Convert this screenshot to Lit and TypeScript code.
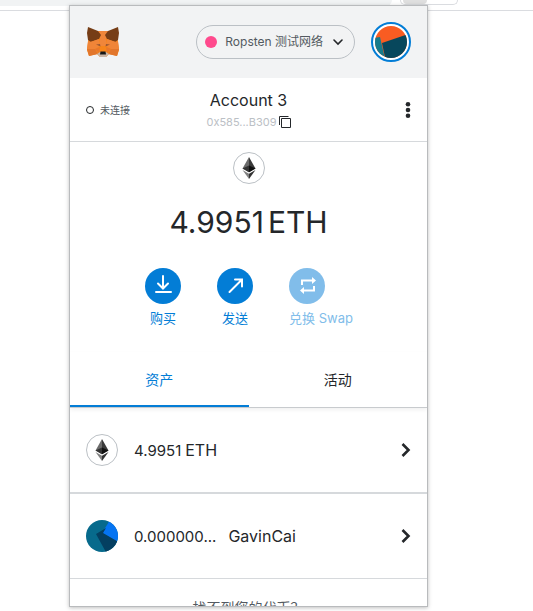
import { LitElement, html, svg, css } from "lit";
import { customElement, property, state } from "lit/decorators.js";
import { classMap } from "lit/directives/class-map.js";

const ethGlyph = svg`
  <path d="M16 5 L9.5 16.5 L16 20.3 Z" fill="#6b6b6b"/>
  <path d="M16 5 L22.5 16.5 L16 20.3 Z" fill="#3a3a3a"/>
  <path d="M9.5 16.5 L16 13.5 V20.3 Z" fill="#333"/>
  <path d="M22.5 16.5 L16 13.5 V20.3 Z" fill="#111"/>
  <path d="M9.5 18 L16 21.8 V27 Z" fill="#808080"/>
  <path d="M22.5 18 L16 21.8 V27 Z" fill="#333"/>`;

@customElement("eth-icon")
class EthIcon extends LitElement {
  static styles = css`
    :host { display: block; width: 32px; height: 32px; }
    svg { display: block; }
  `;
  render() {
    return html`<svg width="32" height="32" viewBox="0 0 32 32" aria-hidden="true">
      <circle cx="16" cy="16" r="15.5" fill="#fff" stroke="#bbc0c5"/>${ethGlyph}
    </svg>`;
  }
}

@customElement("token-row")
class TokenRow extends LitElement {
  @property() amount = "";
  @property() symbol = "";

  static styles = css`
    :host { display: block; }
    .row {
      display: flex; align-items: center; width: 100%; height: 84px;
      padding: 0 16px; box-sizing: border-box; border: 0; background: none;
      color: #24272a; font: 16px/22px Inter, "Noto Sans CJK SC", sans-serif;
      text-align: left; cursor: pointer;
    }
    .text { flex: 1; display: flex; align-items: baseline; gap: 12px; margin-left: 16px; white-space: pre; }
    .text.tight { gap: 4px; }
    .amount { font-size: 15px; }
    svg { display: block; }
  `;
  render() {
    return html`<button class="row">
      <slot></slot>
      <span class=${classMap({ text: true, tight: this.symbol === "ETH" })}><span class="amount">${this.amount}</span><span>${this.symbol}</span></span>
      <svg width="10" height="16" viewBox="0 0 10 16" aria-hidden="true">
        <path d="M1.5 2 L7.5 8 L1.5 14" fill="none" stroke="#24272a" stroke-width="2.6"/>
      </svg>
    </button>`;
  }
}

@customElement("app-root")
class AppRoot extends LitElement {
  @state() tab = "assets";

  static styles = css`
    :host {
      display: flex; flex-direction: column; height: 100vh; overflow: hidden;
      background: #fff; color: #24272a;
      font: 14px/20px Inter, "Noto Sans CJK SC", sans-serif;
    }
    button { font: inherit; color: inherit; padding: 0; border: 0; background: none; cursor: pointer; }
    svg { display: block; }
    .browser {
      display: flex; flex: none; height: 10px; box-sizing: content-box;
      border-bottom: 1px solid #dadce0; overflow: hidden;
    }
    .address { width: 392px; height: 6px; background: #f1f3f4; border-radius: 0 0 12px 0; }
    .profile {
      width: 56px; height: 4px; margin-left: 8px;
      border: 1px solid #dadce0; border-top: 0; border-radius: 0 0 14px 14px;
    }
    .person { width: 24px; height: 4px; margin-left: 2px; background: #dfdfdf; border-radius: 0 0 12px 12px; }
    .popup {
      flex: 1; min-height: 0; margin: -6px 105px 4px 69px; position: relative;
      display: flex; flex-direction: column; overflow: hidden;
      background: #fff; border: 1px solid #b9bbbd; box-shadow: 0 1px 4px rgba(0, 0, 0, 0.25);
    }
    .popup > * { flex: none; }
    .top {
      display: flex; align-items: center; height: 72px; padding: 0 16px;
      background: #f2f3f4;
    }
    .network {
      display: flex; align-items: center; height: 34px; margin-left: auto;
      padding: 0 11px 0 8px; border: 1px solid #bbc0c5; border-radius: 17px;
      color: #535a61; font-size: 12px; box-sizing: border-box;
    }
    .dot { width: 12px; height: 12px; margin-right: 8px; border-radius: 50%; background: #ff4a8d; }
    .network svg { margin-left: 10px; }
    .avatar { margin-left: 16px; }
    .account {
      display: grid; grid-template-columns: 1fr auto 1fr; align-items: center;
      height: 63px; padding: 0 16px; border-bottom: 1px solid #d6d9dc;
    }
    .status { display: flex; align-items: center; gap: 6px; font-size: 10px; color: #535a61; }
    .ring { width: 8px; height: 8px; box-sizing: border-box; border: 1px solid #24272a; border-radius: 50%; }
    .who { display: flex; flex-direction: column; align-items: center; padding-top: 2px; }
    .name { font-size: 16px; line-height: 22px; }
    .hash { display: flex; align-items: center; gap: 2px; font-size: 11px; line-height: 22px; color: #bbc0c5; }
    .more { justify-self: end; }
    .balance { display: flex; flex-direction: column; align-items: center; padding-top: 10px; }
    .amount { display: flex; gap: 4px; margin-top: 16px; font-size: 30px; line-height: 44px; }
    .actions { display: flex; gap: 36px; margin-top: 24px; color: #037dd6; font-size: 13px; }
    .action { display: flex; flex-direction: column; align-items: center; gap: 4px; width: 36px; white-space: nowrap; }
    .action.off { width: 63px; color: #81bdea; align-items: flex-start; }
    .tabs { display: flex; margin-top: 24px; border-bottom: 1px solid #c8cbce; box-shadow: 0 2px 4px rgba(0, 0, 0, 0.06); }
    .tab { flex: 1; height: 55px; padding-top: 3px; border-bottom: 2px solid transparent; }
    .tab.on { color: #037dd6; border-color: #037dd6; }
    .first { border-bottom: 2px solid #d6d9dc; }
    .second { border-bottom: 1px solid #d6d9dc; }
    .missing { margin: 18px 0 0; text-align: center; color: #535a61; font-family: "Noto Sans CJK SC", sans-serif; }
  `;

  fox() {
    return html`<svg width="34" height="32" viewBox="0 0 34 32" role="img" aria-label="MetaMask">
      <path d="M3 8 L12 5 H22 L31 8 L33 24 L31 30 L23 28 L20 31 H14 L11 28 L3 30 L1 24 Z" fill="#f6851b"/>
      <path d="M11 5 H23 L20 12 V20 H14 V12 Z" fill="#f0863a"/>
      <path d="M1 23 H9 L12 28 L3 30 Z M33 23 H25 L22 28 L31 30 Z" fill="#e2762c"/>
      <path d="M2 1 L12 5 L15 9 L13 13 L5 16 L2 14 L1 7 Z M32 1 L22 5 L19 9 L21 13 L29 16 L32 14 L33 7 Z" fill="#763d16"/>
      <path d="M2 15 L4 16 L13 13 L14 20 L9 23 H1 Z M32 15 L30 16 L21 13 L20 20 L25 23 H33 Z" fill="#f08538"/>
      <path d="M10 18.5 L14 18 L14.5 20.5 Z M24 18.5 L20 18 L19.5 20.5 Z" fill="#9a5832"/>
      <path d="M9 23 L14 21 L13 27 Z M25 23 L20 21 L21 27 Z" fill="#e8772c"/>
      <path d="M11 28 L14 26 H20 L23 28 L20 31 H14 Z" fill="#c9b5a5"/>
      <path d="M14.5 25.5 H19.5 L20 28.5 H14 Z" fill="#161616"/>
    </svg>`;
  }

  render() {
    return html`
      <div class="browser">
        <div class="address"></div>
        <div class="profile"><div class="person"></div></div>
      </div>
      <main class="popup">
        <header class="top">
          ${this.fox()}
          <button class="network">
            <span class="dot"></span>Ropsten 测试网络
            <svg width="10" height="7" viewBox="0 0 10 7" aria-hidden="true">
              <path d="M1 1 L5 5 L9 1" fill="none" stroke="#24272a" stroke-width="1.6" stroke-linecap="round"/>
            </svg>
          </button>
          <button class="avatar" aria-label="Account menu">
            <svg width="40" height="40" viewBox="0 0 40 40">
              <defs><clipPath id="face"><circle cx="20" cy="20" r="16"/></clipPath></defs>
              <circle cx="20" cy="20" r="19" fill="#fff" stroke="#037dd6" stroke-width="2"/>
              <g clip-path="url(#face)">
                <path d="M0 0 H40 V40 H0 Z" fill="#f95c22"/>
                <path d="M11 21 L40 11 V40 H15 Z" fill="#07475c"/>
                <path d="M3 16 L9 15 L14 37 H3 Z" fill="#177b8c"/>
              </g>
            </svg>
          </button>
        </header>

        <section class="account">
          <div class="status"><span class="ring"></span>未连接</div>
          <div class="who">
            <span class="name">Account 3</span>
            <button class="hash">0x585...B309
              <svg width="12" height="12" viewBox="0 0 12 12" aria-hidden="true">
                <path d="M0.5 9 V0.5 H9.5 M2.5 2.5 H11.5 V11.5 H2.5 Z" fill="none" stroke="#24272a"/>
              </svg>
            </button>
          </div>
          <button class="more" aria-label="Options">
            <svg width="6" height="16" viewBox="0 0 6 16" fill="#24272a">
              <circle cx="3" cy="2.3" r="2.3"/><circle cx="3" cy="8" r="2.3"/><circle cx="3" cy="13.7" r="2.3"/>
            </svg>
          </button>
        </section>

        <section class="balance">
          <eth-icon></eth-icon>
          <div class="amount"><span>4.9951</span><span>ETH</span></div>
          <div class="actions">
            <button class="action">
              <svg width="36" height="36" viewBox="0 0 36 36" fill="none" stroke="#fff" stroke-width="2">
                <circle cx="18" cy="18" r="18" fill="#037dd6" stroke="none"/>
                <path d="M18 8 V20 M13 15.5 L18 20.5 L23 15.5 M11 24 H26" stroke-linecap="round"/>
              </svg>
              购买
            </button>
            <button class="action">
              <svg width="36" height="36" viewBox="0 0 36 36" fill="none" stroke="#fff" stroke-width="2">
                <circle cx="18" cy="18" r="18" fill="#037dd6" stroke="none"/>
                <path d="M12.5 24 L25 11.5 M18 11.5 H25 V18.5" stroke-linecap="round"/>
              </svg>
              发送
            </button>
            <button class="action off" disabled>
              <svg width="36" height="36" viewBox="0 0 36 36" fill="none" stroke="#fff" stroke-width="2">
                <circle cx="18" cy="18" r="18" fill="#81bdea" stroke="none"/>
                <path d="M13 17 V12.5 H24 M25 18 V22.5 H14"/>
                <path d="M23 9 L27 12.5 L23 16 Z M15 19 L11 22.5 L15 26 Z" fill="#fff" stroke="none"/>
              </svg>
              兑换 Swap
            </button>
          </div>
        </section>

        <nav class="tabs">
          <button class=${classMap({ tab: true, on: this.tab === "assets" })} @click=${() => (this.tab = "assets")}>资产</button>
          <button class=${classMap({ tab: true, on: this.tab === "activity" })} @click=${() => (this.tab = "activity")}>活动</button>
        </nav>

        <token-row class="first" amount="4.9951" symbol="ETH"><eth-icon></eth-icon></token-row>
        <token-row class="second" amount="0.000000..." symbol="GavinCai">
          <svg width="32" height="32" viewBox="0 0 32 32" aria-hidden="true">
            <defs><clipPath id="token"><circle cx="16" cy="16" r="16"/></clipPath></defs>
            <g clip-path="url(#token)">
              <path d="M0 0 H32 V32 H0 Z" fill="#076a8c"/>
              <path d="M24 0 L16 13 L32 22 V0 Z" fill="#0574f2"/>
              <path d="M10 14 L20 8 L17 13 L34 23 L28 34 H21 Z" fill="#043f61"/>
            </g>
          </svg>
        </token-row>
        <p class="missing">找不到您的代币&#xFF1F;</p>
      </main>
    `;
  }
}
